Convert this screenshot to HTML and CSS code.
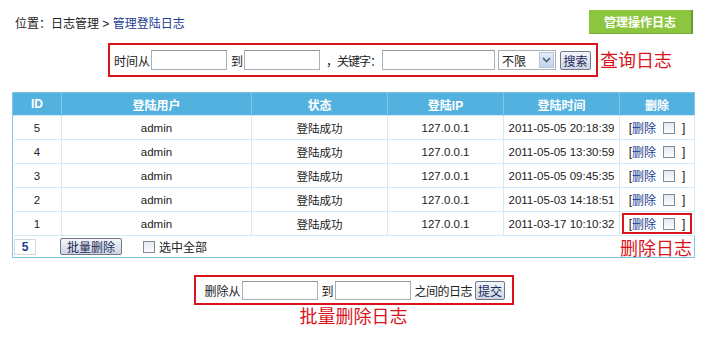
FILE: index.html
```html
<!DOCTYPE html>
<html lang="zh-CN">

<head>
    <meta charset="UTF-8">
    <title>管理登陆日志</title>
    <link rel="stylesheet" href="styles.css">
</head>

<body>
    <div class="page">
        <div class="topbar">
            <div class="crumb">位置：日志管理 &gt; <a href="#">管理登陆日志</a></div>
            <a class="btn-green" href="#">管理操作日志</a>
        </div>

        <div class="search-line">
            <form class="red-box search-box">
                <span>时间从</span>
                <input class="txt" type="text">
                <span>到</span>
                <input class="txt" type="text">
                <span class="kw">，关键字：</span>
                <input class="txt txt-long" type="text">
                <span class="select">
                    <span class="select-val">不限</span>
                    <span class="select-arrow">
                        <svg width="9" height="6" viewBox="0 0 9 6"><path d="M1 1 L4.5 4.5 L8 1" fill="none" stroke="#4a5d78" stroke-width="1.6"/></svg>
                    </span>
                </span>
                <button class="btn-gray btn-search" type="button">搜索</button>
                <span class="note note-search">查询日志</span>
            </form>
        </div>

        <table class="log-table">
            <thead>
                <tr>
                    <th class="c-id">ID</th>
                    <th class="c-user">登陆用户</th>
                    <th class="c-state">状态</th>
                    <th class="c-ip">登陆IP</th>
                    <th class="c-time">登陆时间</th>
                    <th class="c-del">删除</th>
                </tr>
            </thead>
            <tbody>
                <tr>
                    <td>5</td><td>admin</td><td>登陆成功</td><td>127.0.0.1</td><td>2011-05-05 20:18:39</td>
                    <td><span class="del-wrap">[<a href="#">删除</a><input class="chk" type="checkbox">]</span></td>
                </tr>
                <tr>
                    <td>4</td><td>admin</td><td>登陆成功</td><td>127.0.0.1</td><td>2011-05-05 13:30:59</td>
                    <td><span class="del-wrap">[<a href="#">删除</a><input class="chk" type="checkbox">]</span></td>
                </tr>
                <tr>
                    <td>3</td><td>admin</td><td>登陆成功</td><td>127.0.0.1</td><td>2011-05-05 09:45:35</td>
                    <td><span class="del-wrap">[<a href="#">删除</a><input class="chk" type="checkbox">]</span></td>
                </tr>
                <tr>
                    <td>2</td><td>admin</td><td>登陆成功</td><td>127.0.0.1</td><td>2011-05-03 14:18:51</td>
                    <td><span class="del-wrap">[<a href="#">删除</a><input class="chk" type="checkbox">]</span></td>
                </tr>
                <tr>
                    <td>1</td><td>admin</td><td>登陆成功</td><td>127.0.0.1</td><td>2011-03-17 10:10:32</td>
                    <td><span class="del-wrap marked">[<a href="#">删除</a><input class="chk" type="checkbox">]</span></td>
                </tr>
            </tbody>
            <tfoot>
                <tr>
                    <td colspan="6">
                        <div class="foot">
                            <span class="count">5</span>
                            <button class="btn-gray btn-batch" type="button">批量删除</button>
                            <label class="check-all"><input class="chk" type="checkbox">选中全部</label>
                            <span class="note note-del">删除日志</span>
                        </div>
                    </td>
                </tr>
            </tfoot>
        </table>

        <div class="batch-line">
            <form class="red-box batch-box">
                <span>删除从</span>
                <input class="txt" type="text">
                <span>到</span>
                <input class="txt" type="text">
                <span class="between">之间的日志</span>
                <button class="btn-gray btn-submit" type="button">提交</button>
            </form>
            <div class="note">批量删除日志</div>
        </div>
    </div>
</body>

</html>
```

FILE: styles.css
```css
:root {
    --head-blue: #52b1de;
    --outer-border: #7dc3e6;
    --cell-border: #d3ebf7;
    --red: #d9141c;
    --link: #1d3c94;
}

* {
    margin: 0;
    padding: 0;
    box-sizing: border-box;
}

body {
    font-family: "Liberation Sans", "Noto Sans CJK SC", sans-serif;
    font-size: 12px;
    color: #222;
    background: #fff;
}

a {
    color: var(--link);
    text-decoration: none;
}

.page {
    width: 695px;
    padding: 10px 0 0 12px;
}

.topbar {
    display: flex;
    justify-content: space-between;
    align-items: center;
    height: 24px;
    padding-right: 2px;
}

.crumb {
    padding-left: 3px;
}

.btn-green {
    display: flex;
    align-items: center;
    justify-content: center;
    width: 104px;
    height: 24px;
    background: #8cc63f;
    border-right: 2px solid #6b9a2c;
    border-bottom: 1px solid #7aae36;
    color: #fff;
    font-weight: bold;
}

.search-line {
    display: flex;
    justify-content: center;
    margin-top: 9px;
}

.red-box {
    position: relative;
    display: flex;
    align-items: center;
    border: 2px solid var(--red);
    white-space: nowrap;
}

.red-box > * {
    flex-shrink: 0;
}

.search-box {
    width: 490px;
    height: 34px;
    padding-left: 4px;
    margin-right: 1px;
}

.txt {
    width: 76px;
    height: 20px;
    border: 1px solid #a9b0b8;
    border-top-color: #8d959e;
    background: #fff;
    margin: 0 4px 0 1px;
}

.kw {
    margin-left: 2px;
    letter-spacing: -1px;
}

.txt-long {
    width: 113px;
}

.select {
    display: flex;
    align-items: center;
    width: 58px;
    height: 20px;
    border: 1px solid #a9b0b8;
    margin-left: -1px;
}

.select-val {
    flex: 1;
    padding-left: 3px;
}

.select-arrow {
    display: flex;
    align-items: center;
    justify-content: center;
    width: 15px;
    height: 16px;
    margin-right: 1px;
    background: linear-gradient(#e3ecf8, #c3d3ea);
    border: 1px solid #b6c6dc;
}

.btn-gray {
    font-family: "Noto Sans CJK SC", sans-serif;
    font-size: 12px;
    line-height: 15px;
    height: 19px;
    padding: 0 2px;
    color: #1d2a5a;
    background: linear-gradient(#f3f5f8, #cdd6e3);
    border: 1px solid #6e7a8c;
    border-radius: 2px;
}

.btn-search {
    width: 31px;
    margin-left: 4px;
}

.between {
    letter-spacing: -0.5px;
}

.btn-submit {
    width: 30px;
    margin-left: 3px;
}

.note {
    color: var(--red);
    font-family: "Noto Sans CJK SC", sans-serif;
    font-size: 18px;
    line-height: 20px;
    white-space: nowrap;
}

.note-search {
    position: absolute;
    left: calc(100% + 4px);
    top: 4px;
}

.log-table {
    width: 683px;
    margin-top: 15px;
    border-collapse: collapse;
    border: 1px solid var(--outer-border);
    table-layout: fixed;
}

.log-table th {
    height: 23px;
    background: var(--head-blue);
    color: #fff;
    font-weight: bold;
    border-left: 1px solid #7fc6e8;
}

.c-id { width: 49px; }
.c-user { width: 190px; }
.c-state { width: 136px; }
.c-ip { width: 116px; }
.c-time { width: 116px; }
.c-del { width: 75px; }

.log-table td {
    height: 24px;
    padding: 0;
    text-align: center;
    border: 1px solid var(--cell-border);
    font-size: 11.5px;
    white-space: nowrap;
}

.log-table tbody td:first-child {
    border-left-color: var(--outer-border);
}

.del-wrap {
    display: inline-flex;
    align-items: center;
    height: 21px;
    padding: 0 5px 0 5px;
    border: 2px solid transparent;
    font-size: 12px;
}

.del-wrap a {
    margin-right: 7px;
}

.del-wrap.marked {
    border-color: var(--red);
}

.chk {
    appearance: none;
    width: 12px;
    height: 12px;
    border: 1px solid #7d8a99;
    background: linear-gradient(#e6e9ee, #fafbfc);
    margin-right: 7px;
}

.log-table tfoot td {
    height: 22px;
    text-align: left;
    border: 0;
    border-top: 1px solid var(--cell-border);
    font-size: 12px;
}

.foot {
    display: flex;
    align-items: center;
    padding-right: 2px;
}

.count {
    width: 22px;
    height: 16px;
    margin-left: 1px;
    border: 1px solid #cfd8e2;
    color: #1d3c94;
    font-weight: bold;
    line-height: 14px;
    text-align: center;
}

.btn-batch {
    width: 62px;
    height: 17px;
    margin-left: 24px;
    padding: 0;
    line-height: 14px;
}

.check-all {
    display: flex;
    align-items: center;
    margin-left: 21px;
}

.check-all .chk {
    margin-right: 4px;
}

.note-del {
    margin-left: auto;
}

.batch-line {
    display: flex;
    flex-direction: column;
    align-items: center;
    margin-top: 17px;
}

.batch-box {
    width: 320px;
    height: 30px;
    padding-left: 9px;
}

.batch-box .txt {
    height: 19px;
}
```
